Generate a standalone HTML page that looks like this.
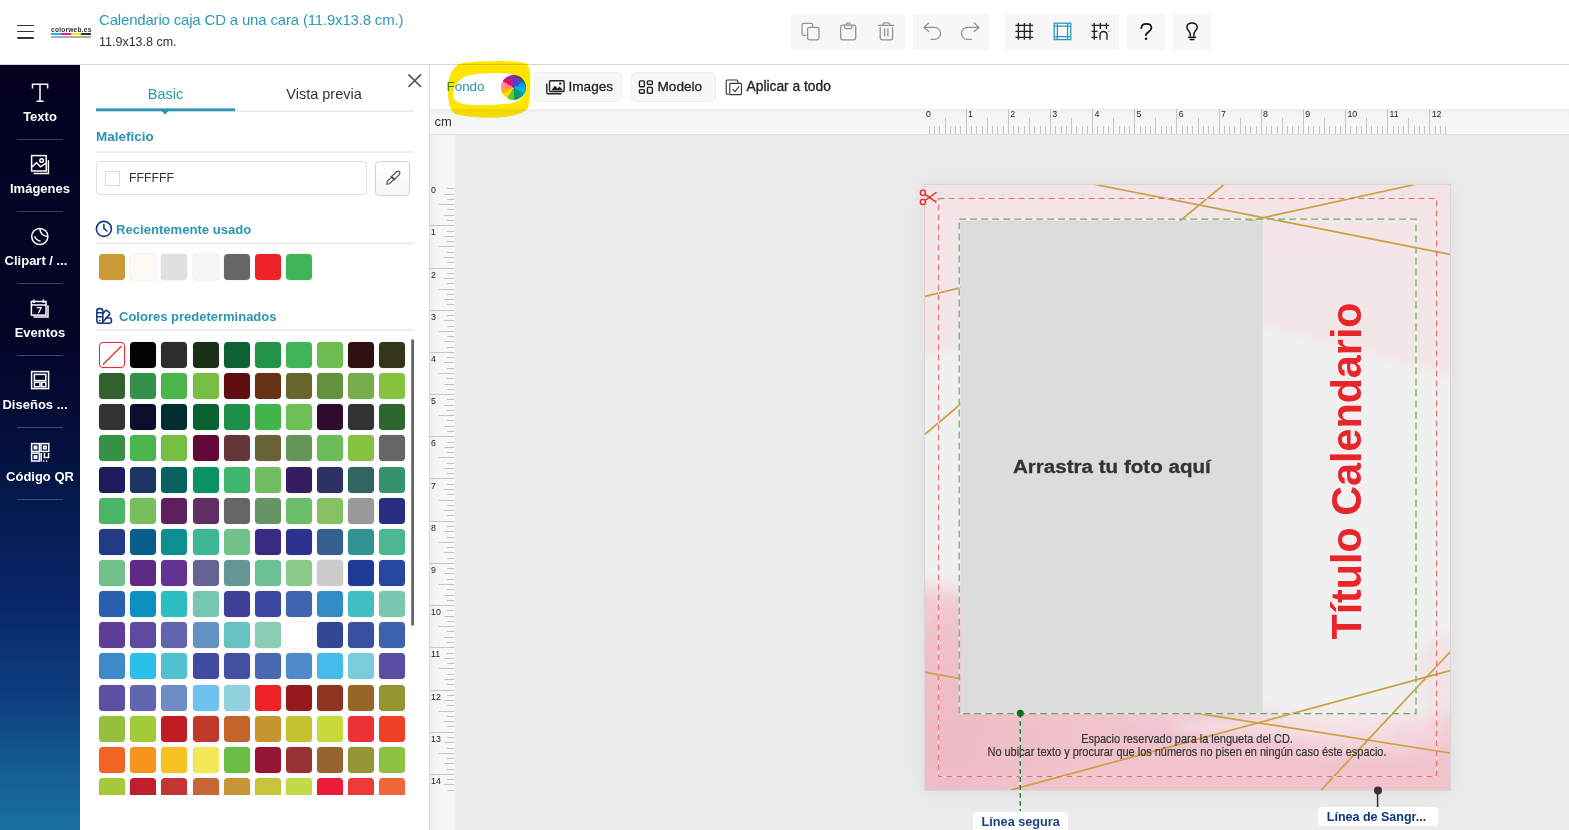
<!DOCTYPE html>
<html><head><meta charset="utf-8">
<style>
*{box-sizing:border-box;margin:0;padding:0}
html,body{width:1569px;height:830px;overflow:hidden;background:#fff;font-family:"Liberation Sans",sans-serif;}
body{position:relative}
.a{position:absolute}
.t{white-space:nowrap;line-height:1}
svg{position:absolute;overflow:visible}
</style></head><body>
<!-- HEADER -->
<div class="a" style="left:0;top:0;width:1569px;height:64px;background:#fff"></div>
<div class="a" style="left:0;top:64px;width:1569px;height:1px;background:#d6d6d6"></div>
<!-- hamburger -->
<div class="a" style="left:17px;top:24.6px;width:17px;height:1.9px;background:#333;border-radius:1px"></div>
<div class="a" style="left:17px;top:30.6px;width:17px;height:1.9px;background:#333;border-radius:1px"></div>
<div class="a" style="left:17px;top:36.7px;width:17px;height:1.9px;background:#333;border-radius:1px"></div>
<!-- logo -->
<div class="a t" style="left:51px;top:26.7px;font-size:6.6px;font-weight:bold;color:#333;letter-spacing:0.22px">colorweb.es</div>
<div class="a" style="left:51px;top:33px;width:10px;height:2px;background:#1fb4ec"></div>
<div class="a" style="left:61px;top:33px;width:10px;height:2px;background:#ec1c8c"></div>
<div class="a" style="left:71px;top:33px;width:10px;height:2px;background:#fcec10"></div>
<div class="a" style="left:81px;top:33px;width:10px;height:2px;background:#333"></div>
<div class="a" style="left:51px;top:36px;width:40px;height:2px;background:#8a8a8a;opacity:.7"></div>
<!-- title -->
<div class="a t" id="title" style="left:99px;top:12px;font-size:15px;letter-spacing:-0.18px;color:#2e9ab5">Calendario caja CD a una cara (11.9x13.8 cm.)</div>
<div class="a t" id="subtitle" style="left:99px;top:35.5px;font-size:12.5px;color:#333">11.9x13.8 cm.</div>
<style>
.sw{width:26px;height:26px;border-radius:4px;box-shadow:0 0 1.5px rgba(0,0,0,.22)}
.rl{font-size:8.8px;color:#222}
</style>
<!-- TOP TOOLBAR -->
<div class="a" style="left:791px;top:14px;width:114px;height:36px;background:#f7f7f7"></div>
<div class="a" style="left:913px;top:14px;width:76px;height:36px;background:#f7f7f7"></div>
<div class="a" style="left:1005px;top:14px;width:114px;height:36px;background:#f7f7f7"></div>
<div class="a" style="left:1127px;top:14px;width:38px;height:36px;background:#f7f7f7"></div>
<div class="a" style="left:1173px;top:14px;width:38px;height:36px;background:#f7f7f7"></div>
<svg style="left:0;top:0" width="1569" height="64" viewBox="0 0 1569 64">
 <g fill="none" stroke="#949494" stroke-width="1.3" stroke-linecap="round" stroke-linejoin="round">
  <!-- copy -->
  <path d="M806 35.3 H803.8 Q802 35.3 802 33.5 V25 Q802 23.3 803.8 23.3 H810.9 Q812.7 23.3 812.7 25 V26.3"/>
  <rect x="807.6" y="27.3" width="11.4" height="12.5" rx="1.8"/>
  <!-- paste -->
  <rect x="840.7" y="25.1" width="15" height="14.7" rx="2"/>
  <path d="M844.5 25.6 V27 Q844.5 28.6 846 28.6 H850.4 Q851.9 28.6 851.9 27 V25.6"/>
  <path d="M846.3 25 V24.3 Q846.3 22.9 847.6 22.9 H848.8 Q850.1 22.9 850.1 24.3 V25"/>
  <!-- trash -->
  <path d="M878.6 25.4 H893.9"/>
  <path d="M883 25.2 V24.3 Q883 22.9 884.4 22.9 H888.4 Q889.8 22.9 889.8 24.3 V25.2"/>
  <path d="M880.2 27.6 V37.8 Q880.2 39.8 882.2 39.8 H890.6 Q892.6 39.8 892.6 37.8 V27.6"/>
  <path d="M884.6 29 V35.8 M887.9 29 V35.8"/>
  <!-- undo -->
  <path d="M928.7 23.1 L923.9 27.4 L928.7 31.6 M923.9 27.4 H934.5 A6 6 0 0 1 934.5 39.4 H931.2"/>
  <!-- redo -->
  <path d="M974.2 23.1 L978.9 27.4 L974.2 31.6 M978.9 27.4 H967.5 A6 6 0 0 0 967.5 39.4 H971.5"/>
 </g>
 <g fill="none" stroke="#222" stroke-width="1.4">
  <!-- grid -->
  <path d="M1018.4 23 V39.8 M1024.4 23 V39.8 M1030.1 23 V39.8 M1015.4 25.4 H1033.1 M1015.4 31.4 H1033.1 M1015.4 37.4 H1033.1"/>
  <!-- grid arc -->
  <path d="M1094.3 23 V39.8 M1100.4 23 V29 M1106.4 23 V29 M1091.5 25.4 H1109 M1091.5 31.4 H1097.5 M1091.5 37.4 H1097.5 M1100 39.8 V35 A3.5 3.5 0 0 1 1107 35 V39.8"/>
  <path d="M1108.5 31.4 H1109.2"/>
 </g>
 <g fill="none" stroke="#2a9ab8" stroke-width="1.3">
  <rect x="1054.2" y="23.2" width="16.6" height="16.4"/>
  <path d="M1057.4 23.2 V39.6 M1067.6 23.2 V39.6 M1054.2 26.2 H1070.8 M1054.2 36.6 H1070.8"/>
 </g>
 <g fill="none" stroke="#111" stroke-width="1.8" stroke-linecap="round">
  <!-- ? -->
  <path d="M1141.3 28.2 Q1141.5 23.9 1146.4 23.9 Q1151.4 23.9 1151.4 27.8 Q1151.4 30.2 1148.5 32 Q1146 33.5 1146 35.2"/>
 </g>
 <circle cx="1146" cy="38.8" r="1.3" fill="#111"/>
 <g fill="none" stroke="#111" stroke-width="1.45" stroke-linecap="round">
  <!-- bulb -->
  <path d="M1190.2 35.8 V34.3 Q1190.2 32.8 1188.8 31 Q1186.9 29 1186.9 27.8 Q1186.9 23 1192 23 Q1197.2 23 1197.2 27.8 Q1197.2 29 1195.3 31 Q1193.9 32.8 1193.9 34.3 V35.8"/>
  <path d="M1188.6 37.2 H1195.6 M1190.2 39.4 H1194"/>
 </g>
</svg>
<!-- SIDEBAR -->
<div class="a" style="left:0;top:65px;width:80px;height:765px;background:linear-gradient(180deg,#020120 0%,#030426 35%,#04103c 50%,#051a4c 57%,#08266a 70%,#0d3f7e 83%,#155f94 93%,#1a70a0 100%)"></div>
<div class="a" style="left:17px;top:139px;width:46px;height:1px;background:#3a3f5e"></div>
<div class="a" style="left:17px;top:211px;width:46px;height:1px;background:#3a3f5e"></div>
<div class="a" style="left:17px;top:283px;width:46px;height:1px;background:#3a4266"></div>
<div class="a" style="left:17px;top:355px;width:46px;height:1px;background:#3a4670"></div>
<div class="a" style="left:17px;top:427px;width:46px;height:1px;background:#3a4a78"></div>
<div class="a" style="left:17px;top:499px;width:46px;height:1px;background:#3d5080"></div>
<div class="a t sl" style="left:0;width:80px;text-align:center;top:110px;font-size:13px;font-weight:bold;color:#fff">Texto</div>
<div class="a t sl" style="left:0;width:80px;text-align:center;top:182px;font-size:13px;font-weight:bold;color:#fff">Imágenes</div>
<div class="a t sl" style="left:-4px;width:80px;text-align:center;top:254px;font-size:13px;font-weight:bold;color:#fff">Clipart / ...</div>
<div class="a t sl" style="left:0;width:80px;text-align:center;top:326px;font-size:13px;font-weight:bold;color:#fff">Eventos</div>
<div class="a t sl" style="left:-5px;width:80px;text-align:center;top:398px;font-size:13px;font-weight:bold;color:#fff">Diseños ...</div>
<div class="a t sl" style="left:0;width:80px;text-align:center;top:470px;font-size:13px;font-weight:bold;color:#fff">Código QR</div>
<svg style="left:0;top:0" width="80" height="500" viewBox="0 0 80 500">
 <g fill="none" stroke="#fff" stroke-width="1.5">
  <!-- T -->
  <path d="M32.5 88.5 V84.2 H47.6 V88.5 M40 84.2 V101.2 M36.6 101.2 H43.6"/>
  <!-- image -->
  <rect x="31.6" y="155.6" width="14.6" height="15.4"/>
  <path d="M32 167 L36.5 162.6 L40.4 166.8 L45.8 163.3"/>
  <circle cx="41.6" cy="160.5" r="1.8"/>
  <path d="M48.4 160.2 V173.6 H33.6"/>
  <!-- clipart -->
  <circle cx="39.8" cy="236.5" r="8.1"/>
  <path d="M39.8 228.5 Q40.3 235.6 47.7 236.6"/>
  <path d="M34.6 236.3 Q36.2 240.3 40.6 241.3"/>
  <!-- eventos -->
  <rect x="31.4" y="301.5" width="14.6" height="13.6"/>
  <path d="M31.4 305 H46"/>
  <path d="M33.9 299.5 V303 M43.4 299.5 V303"/>
  <path d="M48 305.2 V317 H33.4"/>
  <path d="M36.7 307.6 H41.2 L38.3 313.2" stroke-width="1.2"/>
  <!-- disenos -->
  <rect x="31.6" y="371.6" width="17" height="17"/>
  <rect x="34.4" y="374.4" width="11.4" height="6.2"/>
  <rect x="34.4" y="382.2" width="5.6" height="4.6"/>
  <rect x="41.8" y="382.2" width="4" height="4.6"/>
  <!-- QR -->
  <rect x="31.6" y="443.6" width="7.8" height="7.8"/>
  <rect x="34.3" y="446.3" width="2.4" height="2.4"/>
  <rect x="41" y="443.6" width="7.8" height="7.8"/>
  <rect x="43.7" y="446.3" width="2.4" height="2.4"/>
  <rect x="31.6" y="453.2" width="7.8" height="7.8"/>
  <rect x="34.3" y="455.9" width="2.4" height="2.4"/>
  <path d="M41.2 453 V461.4 M44.4 453 V457.6 H48.6 V453 M43.2 460.9 H44.4 M46 460.9 H47.2"/>
 </g>
</svg>
<!-- PANEL -->
<div class="a" style="left:80px;top:65px;width:349px;height:765px;background:#fff"></div>
<div class="a" style="left:429px;top:65px;width:1px;height:765px;background:#dcdcdc"></div>
<svg style="left:0;top:0" width="430" height="340" viewBox="0 0 430 340"><path d="M408.4 74.4 L421 87 M421 74.4 L408.4 87" stroke="#555" stroke-width="1.7" fill="none"/><rect x="96" y="110.6" width="318" height="1" fill="#dde1e5"/><rect x="96" y="108.4" width="139" height="2.8" fill="#2a95b2"/><path d="M161.5 111 L165 114.6 L168.5 111 Z" fill="#2a95b2"/><rect x="96" y="151.6" width="318" height="1" fill="#dde1e5"/><rect x="96" y="242.8" width="318" height="1" fill="#dde1e5"/><rect x="96" y="329.6" width="318" height="1" fill="#dde1e5"/><g fill="none" stroke="#143c82" stroke-width="1.6" stroke-linecap="round"><circle cx="103.9" cy="228.9" r="7.5"/><path d="M103.9 224.6 V228.5 L107 231"/></g><g fill="none" stroke="#143c82" stroke-width="1.6" stroke-linejoin="round"><path d="M96.8 311 Q96.8 308.6 99.4 308.6 H100.4 Q102.8 308.6 102.8 311 V323.2 H99.6 Q96.8 323.2 96.8 320.4 Z M96.8 312.8 H102.8 M96.8 316.8 H102.8"/><path d="M102.8 313.6 L105.4 310.8 Q106.4 309.9 107.4 310.8 L109.4 312.8 Q110.2 313.7 109.4 314.6 L102.8 322"/><path d="M105.2 318 H109.8 Q111.4 318 111.4 319.6 V321.6 Q111.4 323.2 109.8 323.2 H101"/></g><circle cx="99.6" cy="320.6" r="0.9" fill="#143c82"/><rect x="411.2" y="339.2" width="2.8" height="286.6" rx="1.4" fill="#666"/></svg>
<div class="a t" style="left:96px;width:139px;text-align:center;top:87px;font-size:14.5px;color:#2a95b2">Basic</div>
<div class="a t" style="left:245px;width:158px;text-align:center;top:87px;font-size:14.5px;color:#333">Vista previa</div>
<div class="a t" style="left:96px;top:130px;font-size:13.5px;font-weight:bold;color:#2a95b2">Maleficio</div>
<div class="a" style="left:96px;top:161px;width:271px;height:34px;border:1px solid #dde1e5;border-radius:4px;background:#fff"></div>
<div class="a" style="left:105px;top:171px;width:15px;height:15px;border:1px solid #d8dce0;background:#fff"></div>
<div class="a t" style="left:129px;top:172px;font-size:12.3px;color:#333">FFFFFF</div>
<div class="a" style="left:375px;top:161px;width:35px;height:34.5px;border:1px solid #cdd4dc;border-radius:4px;background:linear-gradient(#fff,#f7f7f7)"></div>
<svg style="left:0;top:0" width="430" height="200" viewBox="0 0 430 200"><g fill="none" stroke="#555" stroke-width="1.2" stroke-linejoin="round" transform="translate(386.8 184.2) rotate(-45)"><path d="M0 0 L2.2 -1.6 H8.4 V1.6 H2.2 Z"/><path d="M8.4 -2.9 V2.9"/><path d="M9 -2 H15.6 A2 2 0 0 1 15.6 2 H9 Z"/></g></svg>
<div class="a t" style="left:116px;top:223px;font-size:13.1px;font-weight:bold;color:#2a95b2">Recientemente usado</div>
<div class="a t" style="left:119px;top:310px;font-size:13px;font-weight:bold;color:#2a95b2">Colores predeterminados</div>
<div class="a sw" style="left:99.10px;top:254px;background:#c99a35"></div>
<div class="a sw" style="left:130.25px;top:254px;background:#fdfaf5"></div>
<div class="a sw" style="left:161.40px;top:254px;background:#e0e0e0"></div>
<div class="a sw" style="left:192.55px;top:254px;background:#f7f7f7"></div>
<div class="a sw" style="left:223.70px;top:254px;background:#666666"></div>
<div class="a sw" style="left:254.85px;top:254px;background:#ed2224"></div>
<div class="a sw" style="left:286.00px;top:254px;background:#3fb558"></div>
<div class="a" style="left:90px;top:336px;width:318px;height:458.5px;overflow:hidden">
<div class="a sw" style="left:9.10px;top:6.10px;background:#fff;border:1.5px solid #ee2a2a"><svg style="left:0;top:0" width="24" height="24"><path d="M3 21.5 L21.5 3" stroke="#ee2a2a" stroke-width="1.3"/></svg></div>
<div class="a sw" style="left:40.25px;top:6.10px;background:#030303"></div>
<div class="a sw" style="left:71.40px;top:6.10px;background:#2d2e2c"></div>
<div class="a sw" style="left:102.55px;top:6.10px;background:#1b2e18"></div>
<div class="a sw" style="left:133.70px;top:6.10px;background:#0e6132"></div>
<div class="a sw" style="left:164.85px;top:6.10px;background:#239249"></div>
<div class="a sw" style="left:196.00px;top:6.10px;background:#3fb558"></div>
<div class="a sw" style="left:227.15px;top:6.10px;background:#6dbd51"></div>
<div class="a sw" style="left:258.30px;top:6.10px;background:#2e1011"></div>
<div class="a sw" style="left:289.45px;top:6.10px;background:#343419"></div>
<div class="a sw" style="left:9.10px;top:37.23px;background:#32602e"></div>
<div class="a sw" style="left:40.25px;top:37.23px;background:#35914a"></div>
<div class="a sw" style="left:71.40px;top:37.23px;background:#4bb54b"></div>
<div class="a sw" style="left:102.55px;top:37.23px;background:#77be42"></div>
<div class="a sw" style="left:133.70px;top:37.23px;background:#600e0f"></div>
<div class="a sw" style="left:164.85px;top:37.23px;background:#653314"></div>
<div class="a sw" style="left:196.00px;top:37.23px;background:#68652c"></div>
<div class="a sw" style="left:227.15px;top:37.23px;background:#62933c"></div>
<div class="a sw" style="left:258.30px;top:37.23px;background:#75ac4c"></div>
<div class="a sw" style="left:289.45px;top:37.23px;background:#85c23f"></div>
<div class="a sw" style="left:9.10px;top:68.36px;background:#333335"></div>
<div class="a sw" style="left:40.25px;top:68.36px;background:#0b0d2b"></div>
<div class="a sw" style="left:71.40px;top:68.36px;background:#002d2f"></div>
<div class="a sw" style="left:102.55px;top:68.36px;background:#076130"></div>
<div class="a sw" style="left:133.70px;top:68.36px;background:#1a9146"></div>
<div class="a sw" style="left:164.85px;top:68.36px;background:#41b54c"></div>
<div class="a sw" style="left:196.00px;top:68.36px;background:#6ebf55"></div>
<div class="a sw" style="left:227.15px;top:68.36px;background:#2e0b2d"></div>
<div class="a sw" style="left:258.30px;top:68.36px;background:#333333"></div>
<div class="a sw" style="left:289.45px;top:68.36px;background:#2e6631"></div>
<div class="a sw" style="left:9.10px;top:99.49px;background:#369147"></div>
<div class="a sw" style="left:40.25px;top:99.49px;background:#4cb44c"></div>
<div class="a sw" style="left:71.40px;top:99.49px;background:#76bf43"></div>
<div class="a sw" style="left:102.55px;top:99.49px;background:#600a35"></div>
<div class="a sw" style="left:133.70px;top:99.49px;background:#653635"></div>
<div class="a sw" style="left:164.85px;top:99.49px;background:#666434"></div>
<div class="a sw" style="left:196.00px;top:99.49px;background:#659655"></div>
<div class="a sw" style="left:227.15px;top:99.49px;background:#6cbd5a"></div>
<div class="a sw" style="left:258.30px;top:99.49px;background:#85c240"></div>
<div class="a sw" style="left:289.45px;top:99.49px;background:#666666"></div>
<div class="a sw" style="left:9.10px;top:130.62px;background:#1c1a5c"></div>
<div class="a sw" style="left:40.25px;top:130.62px;background:#1c3461"></div>
<div class="a sw" style="left:71.40px;top:130.62px;background:#08605f"></div>
<div class="a sw" style="left:102.55px;top:130.62px;background:#0b9262"></div>
<div class="a sw" style="left:133.70px;top:130.62px;background:#3fb56b"></div>
<div class="a sw" style="left:164.85px;top:130.62px;background:#6fbe61"></div>
<div class="a sw" style="left:196.00px;top:130.62px;background:#361b5f"></div>
<div class="a sw" style="left:227.15px;top:130.62px;background:#2e3163"></div>
<div class="a sw" style="left:258.30px;top:130.62px;background:#316564"></div>
<div class="a sw" style="left:289.45px;top:130.62px;background:#36926a"></div>
<div class="a sw" style="left:9.10px;top:161.75px;background:#4cb565"></div>
<div class="a sw" style="left:40.25px;top:161.75px;background:#77be5d"></div>
<div class="a sw" style="left:71.40px;top:161.75px;background:#5f1e5e"></div>
<div class="a sw" style="left:102.55px;top:161.75px;background:#632f63"></div>
<div class="a sw" style="left:133.70px;top:161.75px;background:#666666"></div>
<div class="a sw" style="left:164.85px;top:161.75px;background:#669665"></div>
<div class="a sw" style="left:196.00px;top:161.75px;background:#6bbd67"></div>
<div class="a sw" style="left:227.15px;top:161.75px;background:#85c262"></div>
<div class="a sw" style="left:258.30px;top:161.75px;background:#999999"></div>
<div class="a sw" style="left:289.45px;top:161.75px;background:#292d7f"></div>
<div class="a sw" style="left:9.10px;top:192.88px;background:#213b86"></div>
<div class="a sw" style="left:40.25px;top:192.88px;background:#085d8d"></div>
<div class="a sw" style="left:71.40px;top:192.88px;background:#0b8f91"></div>
<div class="a sw" style="left:102.55px;top:192.88px;background:#3fb794"></div>
<div class="a sw" style="left:133.70px;top:192.88px;background:#71c189"></div>
<div class="a sw" style="left:164.85px;top:192.88px;background:#392b84"></div>
<div class="a sw" style="left:196.00px;top:192.88px;background:#2c3290"></div>
<div class="a sw" style="left:227.15px;top:192.88px;background:#335f91"></div>
<div class="a sw" style="left:258.30px;top:192.88px;background:#339393"></div>
<div class="a sw" style="left:289.45px;top:192.88px;background:#4cb88f"></div>
<div class="a sw" style="left:9.10px;top:224.01px;background:#73c18a"></div>
<div class="a sw" style="left:40.25px;top:224.01px;background:#5e2a85"></div>
<div class="a sw" style="left:71.40px;top:224.01px;background:#623391"></div>
<div class="a sw" style="left:102.55px;top:224.01px;background:#636494"></div>
<div class="a sw" style="left:133.70px;top:224.01px;background:#659594"></div>
<div class="a sw" style="left:164.85px;top:224.01px;background:#6bc195"></div>
<div class="a sw" style="left:196.00px;top:224.01px;background:#8acb88"></div>
<div class="a sw" style="left:227.15px;top:224.01px;background:#cccccc"></div>
<div class="a sw" style="left:258.30px;top:224.01px;background:#203b96"></div>
<div class="a sw" style="left:289.45px;top:224.01px;background:#2647a0"></div>
<div class="a sw" style="left:9.10px;top:255.14px;background:#2760ad"></div>
<div class="a sw" style="left:40.25px;top:255.14px;background:#0d90c1"></div>
<div class="a sw" style="left:71.40px;top:255.14px;background:#2bbdbf"></div>
<div class="a sw" style="left:102.55px;top:255.14px;background:#75c6b2"></div>
<div class="a sw" style="left:133.70px;top:255.14px;background:#3f3f98"></div>
<div class="a sw" style="left:164.85px;top:255.14px;background:#3c489f"></div>
<div class="a sw" style="left:196.00px;top:255.14px;background:#4064ad"></div>
<div class="a sw" style="left:227.15px;top:255.14px;background:#338cc3"></div>
<div class="a sw" style="left:258.30px;top:255.14px;background:#40bfc0"></div>
<div class="a sw" style="left:289.45px;top:255.14px;background:#78c8b0"></div>
<div class="a sw" style="left:9.10px;top:286.27px;background:#5e3d98"></div>
<div class="a sw" style="left:40.25px;top:286.27px;background:#5e4b9f"></div>
<div class="a sw" style="left:71.40px;top:286.27px;background:#6264ad"></div>
<div class="a sw" style="left:102.55px;top:286.27px;background:#6293c4"></div>
<div class="a sw" style="left:133.70px;top:286.27px;background:#65c1c2"></div>
<div class="a sw" style="left:164.85px;top:286.27px;background:#89cdb2"></div>
<div class="a sw" style="left:196.00px;top:286.27px;background:#ffffff"></div>
<div class="a sw" style="left:227.15px;top:286.27px;background:#334993"></div>
<div class="a sw" style="left:258.30px;top:286.27px;background:#38509f"></div>
<div class="a sw" style="left:289.45px;top:286.27px;background:#3e63ad"></div>
<div class="a sw" style="left:9.10px;top:317.40px;background:#3e8ac8"></div>
<div class="a sw" style="left:40.25px;top:317.40px;background:#2bc0eb"></div>
<div class="a sw" style="left:71.40px;top:317.40px;background:#51c1ce"></div>
<div class="a sw" style="left:102.55px;top:317.40px;background:#3f4aa0"></div>
<div class="a sw" style="left:133.70px;top:317.40px;background:#4150a2"></div>
<div class="a sw" style="left:164.85px;top:317.40px;background:#4867b0"></div>
<div class="a sw" style="left:196.00px;top:317.40px;background:#518ac8"></div>
<div class="a sw" style="left:227.15px;top:317.40px;background:#43bcea"></div>
<div class="a sw" style="left:258.30px;top:317.40px;background:#78cdd8"></div>
<div class="a sw" style="left:289.45px;top:317.40px;background:#5b4da2"></div>
<div class="a sw" style="left:9.10px;top:348.53px;background:#5c50a2"></div>
<div class="a sw" style="left:40.25px;top:348.53px;background:#6266b0"></div>
<div class="a sw" style="left:71.40px;top:348.53px;background:#6d8cc6"></div>
<div class="a sw" style="left:102.55px;top:348.53px;background:#6fc1ee"></div>
<div class="a sw" style="left:133.70px;top:348.53px;background:#8ed0dc"></div>
<div class="a sw" style="left:164.85px;top:348.53px;background:#ed2224"></div>
<div class="a sw" style="left:196.00px;top:348.53px;background:#93191c"></div>
<div class="a sw" style="left:227.15px;top:348.53px;background:#8e3520"></div>
<div class="a sw" style="left:258.30px;top:348.53px;background:#976526"></div>
<div class="a sw" style="left:289.45px;top:348.53px;background:#939533"></div>
<div class="a sw" style="left:9.10px;top:379.66px;background:#97bf3e"></div>
<div class="a sw" style="left:40.25px;top:379.66px;background:#a3cb39"></div>
<div class="a sw" style="left:71.40px;top:379.66px;background:#be1e24"></div>
<div class="a sw" style="left:102.55px;top:379.66px;background:#c13a29"></div>
<div class="a sw" style="left:133.70px;top:379.66px;background:#c46428"></div>
<div class="a sw" style="left:164.85px;top:379.66px;background:#c7952e"></div>
<div class="a sw" style="left:196.00px;top:379.66px;background:#c6c330"></div>
<div class="a sw" style="left:227.15px;top:379.66px;background:#c8da3a"></div>
<div class="a sw" style="left:258.30px;top:379.66px;background:#eb3237"></div>
<div class="a sw" style="left:289.45px;top:379.66px;background:#ef4123"></div>
<div class="a sw" style="left:9.10px;top:410.79px;background:#f26522"></div>
<div class="a sw" style="left:40.25px;top:410.79px;background:#f7941d"></div>
<div class="a sw" style="left:71.40px;top:410.79px;background:#f6c221"></div>
<div class="a sw" style="left:102.55px;top:410.79px;background:#f2e85a"></div>
<div class="a sw" style="left:133.70px;top:410.79px;background:#6abd45"></div>
<div class="a sw" style="left:164.85px;top:410.79px;background:#931533"></div>
<div class="a sw" style="left:196.00px;top:410.79px;background:#983236"></div>
<div class="a sw" style="left:227.15px;top:410.79px;background:#956530"></div>
<div class="a sw" style="left:258.30px;top:410.79px;background:#969535"></div>
<div class="a sw" style="left:289.45px;top:410.79px;background:#8dc13f"></div>
<div class="a sw" style="left:9.10px;top:441.92px;background:#a4ca3a"></div>
<div class="a sw" style="left:40.25px;top:441.92px;background:#be1e2d"></div>
<div class="a sw" style="left:71.40px;top:441.92px;background:#c23734"></div>
<div class="a sw" style="left:102.55px;top:441.92px;background:#c66535"></div>
<div class="a sw" style="left:133.70px;top:441.92px;background:#c79537"></div>
<div class="a sw" style="left:164.85px;top:441.92px;background:#c6c437"></div>
<div class="a sw" style="left:196.00px;top:441.92px;background:#c2da48"></div>
<div class="a sw" style="left:227.15px;top:441.92px;background:#ec1c38"></div>
<div class="a sw" style="left:258.30px;top:441.92px;background:#ec3b36"></div>
<div class="a sw" style="left:289.45px;top:441.92px;background:#f26739"></div>
</div>
<!-- CANVAS AREA -->
<div class="a" style="left:430px;top:65px;width:1139px;height:44px;background:#fff"></div>
<div class="a" style="left:430px;top:109px;width:1139px;height:25.5px;background:linear-gradient(180deg,#ededed 0px,#f5f5f5 6px,#f7f7f7 100%)"></div>
<div class="a" style="left:430px;top:134px;width:1139px;height:1px;background:#e2e2e2"></div>
<div class="a" style="left:430px;top:135px;width:24.5px;height:695px;background:linear-gradient(90deg,#ececec 0px,#f5f5f5 5px,#f7f7f7 100%)"></div>
<div class="a" style="left:454.5px;top:135px;width:1114.5px;height:695px;background:#ececec"></div>
<div class="a t" style="left:434.6px;top:115.2px;font-size:13px;color:#333">cm</div>
<!-- toolbar -->
<div class="a t" style="left:446.5px;top:80px;font-size:13.4px;color:#2a95b2">Fondo</div>
<div class="a" style="left:500.7px;top:74.7px;width:25px;height:25px;border-radius:50%;background:conic-gradient(#6a36b6 0deg 30deg,#3e4fc4 30deg 60deg,#0a98f4 60deg 90deg,#06b2dc 90deg 120deg,#079e8e 120deg 150deg,#08a04a 150deg 180deg,#72c23c 180deg 210deg,#f9e20c 210deg 240deg,#ffb000 240deg 270deg,#ff8a96 270deg 300deg,#f20068 300deg 330deg,#8a2eb0 330deg 360deg)"></div>
<svg style="left:0;top:0;mix-blend-mode:multiply" width="600" height="130" viewBox="0 0 600 130">
 <path fill="#ffe500" fill-rule="evenodd" d="M448 90 Q447.5 68 462 63 Q480 60.5 505 61 Q520 61.5 527 64 Q530.5 67 530.3 80 Q530.5 100 528 108 Q522 116 498 117.6 Q470 118 455 114 Q448 110 448 90 Z
 M453 96 Q452.5 83 466 76 Q480 72.5 500 73 Q524 73.8 525.5 88 Q525 101 510 103.5 Q485 106 466 104.6 Q454 102.5 453 96 Z"/>
</svg>
<div class="a" style="left:534px;top:72px;width:88px;height:29.5px;background:#f7f7f7;border:1px solid #efefef;border-radius:5px"></div>
<div class="a" style="left:630.5px;top:72px;width:85.5px;height:29.5px;background:#f7f7f7;border:1px solid #efefef;border-radius:5px"></div>
<div class="a t" style="left:568.5px;top:80px;font-size:13.6px;color:#222;-webkit-text-stroke:0.3px #222">Images</div>
<div class="a t" style="left:657.5px;top:80px;font-size:13.6px;color:#222;-webkit-text-stroke:0.3px #222">Modelo</div>
<div class="a t" style="left:746.5px;top:80px;font-size:13.8px;color:#222;-webkit-text-stroke:0.3px #222">Aplicar a todo</div>
<svg style="left:0;top:0" width="900" height="110" viewBox="0 0 900 110">
 <g fill="none" stroke="#222" stroke-width="1.4" stroke-linejoin="round">
  <rect x="549.5" y="80.8" width="14.6" height="10.8" rx="1"/>
  <path d="M546.8 83.6 V92.2 Q546.8 93.8 548.4 93.8 H561.4"/>
  <rect x="639.4" y="80.9" width="5" height="5.8" rx="1"/>
  <rect x="639.4" y="89.6" width="5" height="3.6" rx="1"/>
  <rect x="647.4" y="80.9" width="5" height="3.6" rx="1"/>
  <rect x="647.4" y="87.4" width="5" height="5.8" rx="1"/>
 </g>
 <path d="M551 90.6 L555 85.8 L557.6 88.4 L559.6 86.6 L563 90.6 Z" fill="#222"/>
 <circle cx="560.2" cy="83.6" r="1.2" fill="#222"/>
 <g fill="none" stroke="#333" stroke-width="1.1">
  <path d="M729.6 94.2 H727.2 Q726.2 94.2 726.2 93.2 V81 Q726.2 80 727.2 80 H736.8 Q737.8 80 737.8 81 V83.2"/>
  <rect x="729.8" y="83.4" width="11.6" height="11.2" rx="0.8"/>
  <path d="M732.6 89 L735 91.6 L739.2 86.4"/>
 </g>
</svg>
<svg style="left:0;top:0" width="1569" height="830" viewBox="0 0 1569 830"><g stroke="#c4c4c4" stroke-width="1" fill="none">
<path d="M929.5 126 V134 M934.5 126 V134 M939.5 126 V134 M945.5 118 V134 M950.5 126 V134 M955.5 126 V134 M960.5 126 V134 M966.5 109 V134 M971.5 126 V134 M976.5 126 V134 M982.5 126 V134 M987.5 118 V134 M992.5 126 V134 M997.5 126 V134 M1003.5 126 V134 M1008.5 109 V134 M1013.5 126 V134 M1018.5 126 V134 M1024.5 126 V134 M1029.5 118 V134 M1034.5 126 V134 M1040.5 126 V134 M1045.5 126 V134 M1050.5 109 V134 M1055.5 126 V134 M1061.5 126 V134 M1066.5 126 V134 M1071.5 118 V134 M1076.5 126 V134 M1082.5 126 V134 M1087.5 126 V134 M1092.5 109 V134 M1097.5 126 V134 M1103.5 126 V134 M1108.5 126 V134 M1113.5 118 V134 M1119.5 126 V134 M1124.5 126 V134 M1129.5 126 V134 M1134.5 109 V134 M1140.5 126 V134 M1145.5 126 V134 M1150.5 126 V134 M1155.5 118 V134 M1161.5 126 V134 M1166.5 126 V134 M1171.5 126 V134 M1176.5 109 V134 M1182.5 126 V134 M1187.5 126 V134 M1192.5 126 V134 M1198.5 118 V134 M1203.5 126 V134 M1208.5 126 V134 M1213.5 126 V134 M1219.5 109 V134 M1224.5 126 V134 M1229.5 126 V134 M1234.5 126 V134 M1240.5 118 V134 M1245.5 126 V134 M1250.5 126 V134 M1256.5 126 V134 M1261.5 109 V134 M1266.5 126 V134 M1271.5 126 V134 M1277.5 126 V134 M1282.5 118 V134 M1287.5 126 V134 M1292.5 126 V134 M1298.5 126 V134 M1303.5 109 V134 M1308.5 126 V134 M1313.5 126 V134 M1319.5 126 V134 M1324.5 118 V134 M1329.5 126 V134 M1335.5 126 V134 M1340.5 126 V134 M1345.5 109 V134 M1350.5 126 V134 M1356.5 126 V134 M1361.5 126 V134 M1366.5 118 V134 M1371.5 126 V134 M1377.5 126 V134 M1382.5 126 V134 M1387.5 109 V134 M1393.5 126 V134 M1398.5 126 V134 M1403.5 126 V134 M1408.5 118 V134 M1414.5 126 V134 M1419.5 126 V134 M1424.5 126 V134 M1429.5 109 V134 M1435.5 126 V134 M1440.5 126 V134 M1445.5 126 V134"/>
<path d="M447 188.5 H454.5 M444 194.5 H454.5 M447 199.5 H454.5 M439 204.5 H454.5 M447 209.5 H454.5 M444 215.5 H454.5 M447 220.5 H454.5 M430 225.5 H454.5 M447 231.5 H454.5 M444 236.5 H454.5 M447 241.5 H454.5 M439 246.5 H454.5 M447 252.5 H454.5 M444 257.5 H454.5 M447 262.5 H454.5 M430 268.5 H454.5 M447 273.5 H454.5 M444 278.5 H454.5 M447 283.5 H454.5 M439 289.5 H454.5 M447 294.5 H454.5 M444 299.5 H454.5 M447 304.5 H454.5 M430 310.5 H454.5 M447 315.5 H454.5 M444 320.5 H454.5 M447 326.5 H454.5 M439 331.5 H454.5 M447 336.5 H454.5 M444 341.5 H454.5 M447 347.5 H454.5 M430 352.5 H454.5 M447 357.5 H454.5 M444 362.5 H454.5 M447 368.5 H454.5 M439 373.5 H454.5 M447 378.5 H454.5 M444 384.5 H454.5 M447 389.5 H454.5 M430 394.5 H454.5 M447 399.5 H454.5 M444 405.5 H454.5 M447 410.5 H454.5 M439 415.5 H454.5 M447 420.5 H454.5 M444 426.5 H454.5 M447 431.5 H454.5 M430 436.5 H454.5 M447 442.5 H454.5 M444 447.5 H454.5 M447 452.5 H454.5 M439 457.5 H454.5 M447 463.5 H454.5 M444 468.5 H454.5 M447 473.5 H454.5 M430 478.5 H454.5 M447 484.5 H454.5 M444 489.5 H454.5 M447 494.5 H454.5 M439 500.5 H454.5 M447 505.5 H454.5 M444 510.5 H454.5 M447 515.5 H454.5 M430 521.5 H454.5 M447 526.5 H454.5 M444 531.5 H454.5 M447 537.5 H454.5 M439 542.5 H454.5 M447 547.5 H454.5 M444 552.5 H454.5 M447 558.5 H454.5 M430 563.5 H454.5 M447 568.5 H454.5 M444 573.5 H454.5 M447 579.5 H454.5 M439 584.5 H454.5 M447 589.5 H454.5 M444 595.5 H454.5 M447 600.5 H454.5 M430 605.5 H454.5 M447 610.5 H454.5 M444 616.5 H454.5 M447 621.5 H454.5 M439 626.5 H454.5 M447 631.5 H454.5 M444 637.5 H454.5 M447 642.5 H454.5 M430 647.5 H454.5 M447 653.5 H454.5 M444 658.5 H454.5 M447 663.5 H454.5 M439 668.5 H454.5 M447 674.5 H454.5 M444 679.5 H454.5 M447 684.5 H454.5 M430 690.5 H454.5 M447 695.5 H454.5 M444 700.5 H454.5 M447 705.5 H454.5 M439 711.5 H454.5 M447 716.5 H454.5 M444 721.5 H454.5 M447 726.5 H454.5 M430 732.5 H454.5 M447 737.5 H454.5 M444 742.5 H454.5 M447 748.5 H454.5 M439 753.5 H454.5 M447 758.5 H454.5 M444 763.5 H454.5 M447 769.5 H454.5 M430 774.5 H454.5 M447 779.5 H454.5 M444 784.5 H454.5 M447 790.5 H454.5"/>
</g></svg>
<div class="a t rl" style="left:925.9px;top:110px">0</div>
<div class="a t rl" style="left:968.0px;top:110px">1</div>
<div class="a t rl" style="left:1010.2px;top:110px">2</div>
<div class="a t rl" style="left:1052.3px;top:110px">3</div>
<div class="a t rl" style="left:1094.5px;top:110px">4</div>
<div class="a t rl" style="left:1136.6px;top:110px">5</div>
<div class="a t rl" style="left:1178.8px;top:110px">6</div>
<div class="a t rl" style="left:1221.0px;top:110px">7</div>
<div class="a t rl" style="left:1263.1px;top:110px">8</div>
<div class="a t rl" style="left:1305.2px;top:110px">9</div>
<div class="a t rl" style="left:1347.4px;top:110px">10</div>
<div class="a t rl" style="left:1389.5px;top:110px">11</div>
<div class="a t rl" style="left:1431.7px;top:110px">12</div>
<div class="a t rl" style="left:431px;top:186.1px">0</div>
<div class="a t rl" style="left:431px;top:228.3px">1</div>
<div class="a t rl" style="left:431px;top:270.5px">2</div>
<div class="a t rl" style="left:431px;top:312.7px">3</div>
<div class="a t rl" style="left:431px;top:354.9px">4</div>
<div class="a t rl" style="left:431px;top:397.1px">5</div>
<div class="a t rl" style="left:431px;top:439.3px">6</div>
<div class="a t rl" style="left:431px;top:481.5px">7</div>
<div class="a t rl" style="left:431px;top:523.7px">8</div>
<div class="a t rl" style="left:431px;top:565.9px">9</div>
<div class="a t rl" style="left:431px;top:608.1px">10</div>
<div class="a t rl" style="left:431px;top:650.3px">11</div>
<div class="a t rl" style="left:431px;top:692.5px">12</div>
<div class="a t rl" style="left:431px;top:734.7px">13</div>
<div class="a t rl" style="left:431px;top:776.9px">14</div>
<!-- PAPER -->
<div class="a" style="left:924px;top:184px;width:527px;height:607px;border:1px solid #d6d6d6;box-shadow:0 0 24px rgba(0,0,0,.07);overflow:hidden;background:#f1f0f0">
 <svg style="left:0;top:0" width="525" height="605" viewBox="0 0 525 605">
  <defs>
   <linearGradient id="tg" x1="0" y1="0" x2="0" y2="1"><stop offset="0" stop-color="#f4e2e6"/><stop offset="1" stop-color="#f3e6e9" stop-opacity="0"/></linearGradient>
   <filter id="bl" x="-20%" y="-20%" width="140%" height="140%"><feGaussianBlur stdDeviation="9"/></filter>
   <filter id="bl2" x="-20%" y="-20%" width="140%" height="140%"><feGaussianBlur stdDeviation="4"/></filter>
  </defs>
  <path d="M-20 -20 H545 V195 C 500 188, 420 160, 338 142 C 250 130, 100 150, 0 172 L-20 175 Z" fill="#f3e6e9" filter="url(#bl2)"/>
  <rect x="0" y="0" width="525" height="150" fill="url(#tg)" opacity=".6"/>
  <path d="M-30 400 C 40 400, 120 430, 220 480 C 290 515, 330 535, 400 540 C 460 544, 500 535, 560 520 L560 640 L-30 640 Z" fill="#f2cbd4" filter="url(#bl)"/>
  <path d="M-30 470 C 40 480, 150 520, 280 550 C 360 565, 440 570, 560 560 L560 640 L-30 640 Z" fill="#f0c3cd" filter="url(#bl)"/>
  <ellipse cx="20" cy="520" rx="50" ry="90" fill="#efbcc8" opacity=".6" filter="url(#bl)"/>
  <ellipse cx="360" cy="542" rx="110" ry="8" fill="#f6e2e6" opacity=".7" filter="url(#bl2)"/>
  <ellipse cx="520" cy="490" rx="30" ry="40" fill="#f2d6dc" opacity=".5" filter="url(#bl)"/>
  <ellipse cx="440" cy="548" rx="80" ry="22" fill="#f6e4e8" opacity=".45" filter="url(#bl)"/>
  <ellipse cx="40" cy="560" rx="90" ry="50" fill="#eeb9c5" opacity=".35" filter="url(#bl)"/>
 </svg>
</div>
<svg style="left:0;top:0" width="1569" height="830" viewBox="0 0 1569 830">
 <defs><clipPath id="pc"><rect x="925" y="185" width="525" height="605"/></clipPath></defs>
 <g clip-path="url(#pc)" stroke="#c9a13e" stroke-width="1.7" fill="none">
  <path d="M1095 184.5 L1450 254.3"/>
  <path d="M1224 184.5 L1100 287"/>
  <path d="M1415 184.5 L1100 253.4"/>
  <path d="M924.5 296.5 L1000 278"/>
  <path d="M924.5 434.5 L1000 371"/>
  <path d="M924.5 672 L1000 686"/>
  <path d="M1011 790 L1450 670.6"/>
  <path d="M1100 698 L1450 753"/>
  <path d="M1321.2 790 L1450 652"/>
 </g>
 <!-- placeholder -->
 <rect x="960.4" y="220.8" width="302.3" height="492.2" fill="#dcdcdc"/>
 <!-- red dashed -->
 <rect x="938.5" y="198.5" width="498" height="578" fill="none" stroke="#fff" stroke-width="1" opacity=".7"/>
 <rect x="938.5" y="198.5" width="498" height="578" fill="none" stroke="#f36464" stroke-width="1" stroke-dasharray="6 4"/>
 <!-- green dashed -->
 <rect x="959.2" y="219.2" width="456.8" height="494.4" fill="none" stroke="#fff" stroke-width="1" opacity=".8"/><rect x="959.2" y="219.2" width="456.8" height="494.4" fill="none" stroke="#62aa62" stroke-width="1.2" stroke-dasharray="7 4"/>
 <!-- scissors -->
 <g fill="none" stroke="#f21d1d" stroke-width="1.3">
  <circle cx="922.9" cy="192.8" r="2.6"/>
  <circle cx="922.9" cy="202" r="2.6"/>
  <path d="M925.4 194.6 L936.5 202.4 M925.4 200.2 L936.5 192.2"/>
 </g>
 <!-- safe line marker -->
 <path d="M1020.5 713 V811" stroke="#fff" stroke-width="1"/>
 <path d="M1020.3 713 V811" stroke="#177a1e" stroke-width="1.3" stroke-dasharray="5 3"/>
 <circle cx="1020.3" cy="713.3" r="3.5" fill="#0b6b1f"/>
 <path d="M1377.6 790 V807" stroke="#333" stroke-width="1.5"/>
 <circle cx="1378" cy="790.5" r="4" fill="#333"/>
</svg>
<div class="a t" style="left:1012.8px;top:457.7px;font-size:18px;font-weight:bold;color:#333;-webkit-text-stroke:0.3px #333;transform-origin:0 0;transform:scaleX(1.143)">Arrastra tu foto aquí</div>
<div class="a t" id="tit" style="left:1346px;top:471px;font-size:43px;font-weight:bold;color:#e8252a;transform:translate(-50%,-50%) rotate(-90deg) scaleX(.96)">Título Calendario</div>
<div class="a t" id="esp1" style="left:1187.2px;top:733px;font-size:12.8px;color:#333;-webkit-text-stroke:0.2px #333;transform:translateX(-50%) scaleX(.855)">Espacio reservado para la lengueta del CD.</div>
<div class="a t" id="esp2" style="left:1187.4px;top:746px;font-size:12.8px;color:#333;-webkit-text-stroke:0.2px #333;transform:translateX(-50%) scaleX(.855)">No ubicar texto y procurar que los números no pisen en ningún caso éste espacio.</div>
<div class="a" style="left:973.3px;top:812px;width:94.8px;height:24px;background:#fff;border-radius:5px"></div>
<div class="a t" style="left:973.3px;width:94.8px;text-align:center;top:815.5px;font-size:12.7px;font-weight:bold;color:#1c417f">Línea segura</div>
<div class="a" style="left:1318px;top:807px;width:120px;height:19px;background:#fff;border-radius:4px"></div>
<div class="a t" style="left:1316.5px;width:120px;text-align:center;top:811px;font-size:12.5px;font-weight:bold;color:#0d3580">Línea de Sangr...</div>
</body></html>
